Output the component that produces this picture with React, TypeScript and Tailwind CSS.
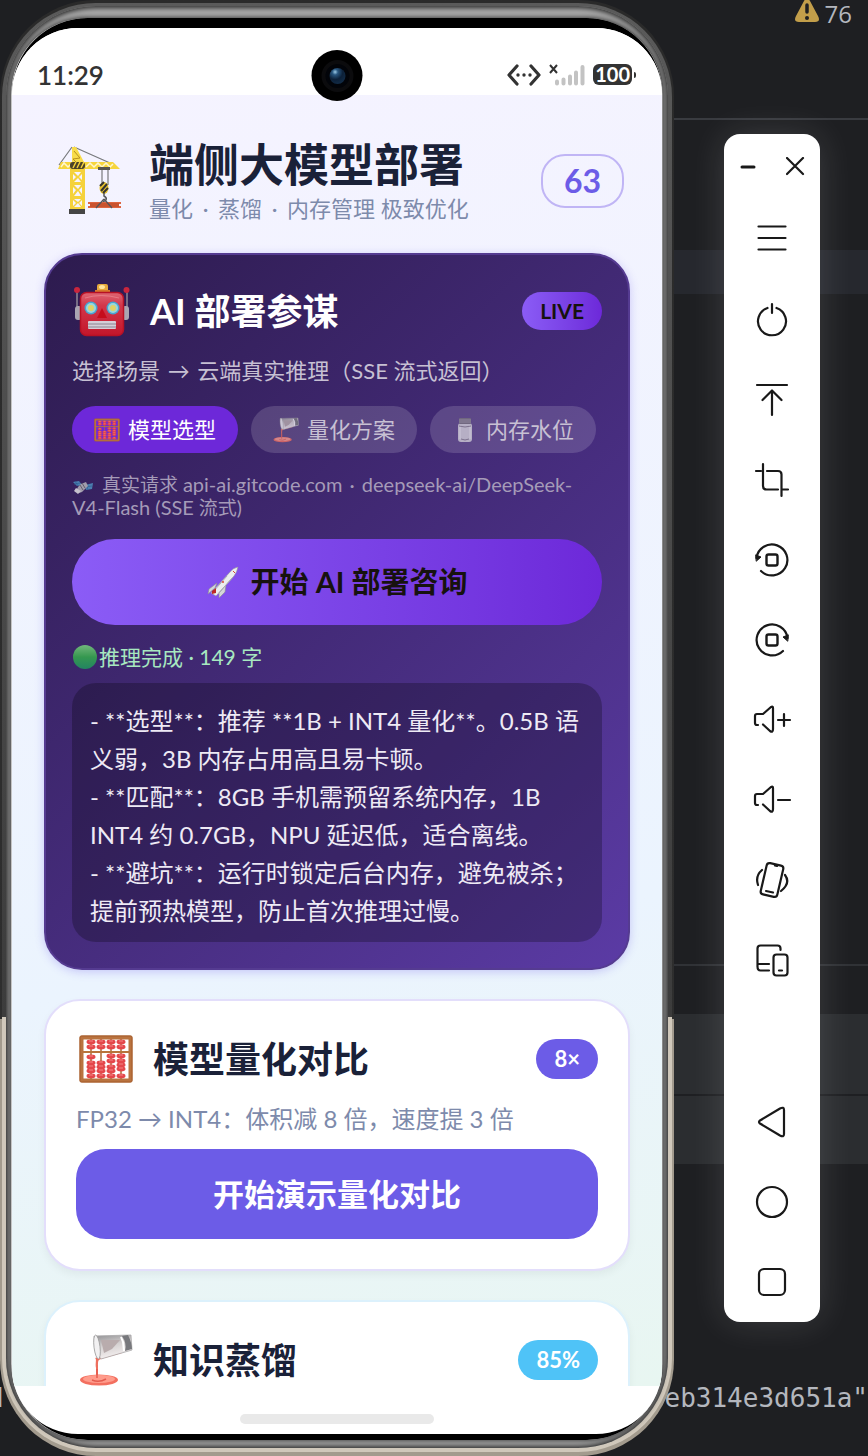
import type { ReactNode } from 'react'

type IconProps = { className?: string }

function Crane({ className }: IconProps) {
  return (
    <svg viewBox="0 0 68 74" className={className} aria-hidden="true">
      <g fill="none" stroke="#77797c" strokeWidth="1.2">
        <path d="M16 5 3 23M18 5l36 16M46 25v18M52 25v18" />
      </g>
      <path d="M16 5h4l8 15H16z" fill="#f8dc4a" />
      <path d="m18 9 6 7-7 1 4 4" fill="none" stroke="#b8901c" strokeWidth="1" />
      <path d="M5 20h52l7 7H2z" fill="#f6d53c" />
      <path d="m5 25 3-4 4 4 4-4m14 4 4-4 4 4 4-4 4 4 4-4 4 4 3-3" fill="none" stroke="#fff6ce" strokeWidth="1.5" />
      <rect x="14" y="20" width="15" height="7" rx="3" fill="#4b4328" />
      <path d="m17 26 3-6m1 6 3-6m1 6 3-6" stroke="#f4d03a" strokeWidth="1.5" />
      <path d="M14 27h15v40H14z" fill="#f5d23b" />
      <g fill="#f6f3fd">
        <path d="m18 30 7 0-3 4zM18 40l7 0-3-4zM18 43h7l-3 4zM18 54h7l-3-5zM18 57h7l-3 3zM18 65h7l-3-4z" />
        <path d="m17 32 3 3-3 3zm9 0-3 3 3 3zM17 45l3 3-3 4zm9 0-3 3 3 4zM17 58l3 3-3 3zm9 0-3 3 3 3z" />
      </g>
      <rect x="13" y="67" width="16" height="5" fill="#454545" />
      <path d="M42 25h12v3H42z" fill="#57544e" />
      <ellipse cx="48" cy="46" rx="4.500" ry="6" fill="#e7c12f" />
      <path d="m45 49 6-7m-4 9 5-5m-8-2 4-4" stroke="#333" strokeWidth="2" />
      <path d="M48 51v3c4 2 2 6-1 5" fill="none" stroke="#55565a" strokeWidth="1.500" />
      <path d="M32 60h33v2H32zM32 64h33v2H32z" fill="#de6540" />
      <path d="M34 61h29v4H34z" fill="#c9532f" />
      <path d="m48 57-8 9m8-9 8 9" fill="none" stroke="#55565a" strokeWidth="1.300" />
    </svg>
  )
}

function Robot({ className }: IconProps) {
  return (
    <svg viewBox="0 0 58 56" className={className} aria-hidden="true">
      <defs>
        <linearGradient id="robot-face" x1="0" y1="0" x2="0" y2="1">
          <stop stopColor="#df6673" />
          <stop offset=".3" stopColor="#d2374b" />
          <stop offset="1" stopColor="#c3162a" />
        </linearGradient>
      </defs>
      <path d="M5 7v17M55 7v17" stroke="#8e8897" strokeWidth="1.500" />
      <circle cx="5" cy="7" r="3" fill="#c9263d" />
      <circle cx="54.500" cy="7" r="3" fill="#c9263d" />
      <rect x="3" y="23" width="7" height="14" rx="3" fill="#aaa5b2" />
      <rect x="50" y="23" width="7" height="14" rx="3" fill="#aaa5b2" />
      <path d="M25 8V3q0-2 2-2h7q2 0 2 2v5z" fill="#e5a93c" />
      <ellipse cx="30" cy="4" rx="3" ry="2" fill="#ffe59a" />
      <rect x="23" y="7" width="15" height="3" fill="#d7772c" />
      <rect x="8.500" y="9.500" width="43" height="43" rx="6" fill="url(#robot-face)" stroke="#b71125" strokeWidth="1.500" />
      <path d="M13 15q16-5 34 0" fill="none" stroke="#ee9299" strokeWidth="1" opacity=".6" />
      <circle cx="19" cy="25" r="6.500" fill="#47a5d2" />
      <circle cx="19" cy="25" r="5" fill="#9bd6da" />
      <circle cx="19" cy="25" r="3" fill="#dfd265" />
      <circle cx="41" cy="25" r="6.500" fill="#47a5d2" />
      <circle cx="41" cy="25" r="5" fill="#9bd6da" />
      <circle cx="41" cy="25" r="3" fill="#dfd265" />
      <path d="m30 25 5 10H25z" fill="#c50d1c" />
      <rect x="16" y="38" width="28" height="8" rx="1" fill="#d4cfd7" />
      <path d="M16 41h28M16 44h28" stroke="#8d8592" strokeWidth="1" />
    </svg>
  )
}

const beadColumns = [
  { x: 12, ys: [7, 12, 22, 28, 32, 36, 41] },
  { x: 22, ys: [7, 12, 28, 32, 36, 41] },
  { x: 32, ys: [7, 12, 21, 26, 32, 36, 41] },
  { x: 42, ys: [7, 12, 21, 26, 30, 34, 41] },
]

function Abacus({ className }: IconProps) {
  return (
    <svg viewBox="0 0 54 48" className={className} aria-hidden="true">
      <path d="M12 4v40M22 4v40M32 4v40M42 4v40" stroke="#b06b35" strokeWidth="1.500" />
      {beadColumns.map((col) =>
        col.ys.map((y) => (
          <g key={`${col.x}-${y}`}>
            <ellipse cx={col.x} cy={y} rx="4.500" ry="2.400" fill="#e4474b" />
            <path d={`M${col.x - 2} ${y - 1}h4`} stroke="#f79592" strokeWidth=".8" />
          </g>
        )),
      )}
      <path d="M3 17h48" stroke="#b8743a" strokeWidth="2" />
      <rect x="2.500" y="2.500" width="49" height="43" rx="1" fill="none" stroke="#b9733f" strokeWidth="4" />
      <rect x="1" y="1" width="52" height="46" rx="1" fill="none" stroke="#a55d2d" strokeWidth="1" />
    </svg>
  )
}

function PouringLiquid({ className }: IconProps) {
  return (
    <svg viewBox="0 0 54 52" className={className} aria-hidden="true">
      <defs>
        <linearGradient id="pour-glass" x1="0" y1="0" x2=".3" y2="1">
          <stop stopColor="#8f8f92" />
          <stop offset=".5" stopColor="#d5d1d1" />
          <stop offset="1" stopColor="#f4efef" />
        </linearGradient>
      </defs>
      <path d="M16 24c2 1 0 5 1 10v10h2V32c0-5 0-6 3-7l21-6-3-2z" fill="#ee6f5e" />
      <path d="m15 2 37-1 1 15-31 9q-7-7-7-23z" fill="url(#pour-glass)" stroke="#aaa8aa" strokeWidth=".8" />
      <path d="M22 6h19l-8 9-8 4z" fill="#b9acad" />
      <ellipse cx="18" cy="13" rx="3" ry="12" transform="rotate(-7 18 13)" fill="#f2f1f2" stroke="#999" strokeWidth=".8" />
      <path d="m43 2 6-1q4 8 4 14l-7 2q2-8-3-15z" fill="#77787c" />
      <path d="m42 3 2 5 1 9" stroke="#fff" strokeWidth="2" fill="none" />
      <ellipse cx="20" cy="46" rx="19" ry="5.500" fill="#f36f5f" />
      <ellipse cx="20" cy="45" rx="16" ry="4" fill="#ff9c8c" />
      <path d="M13 46q7 3 14-1M18 44v-9" fill="none" stroke="#e45b4e" strokeWidth="1.500" />
    </svg>
  )
}

function Jar({ className }: IconProps) {
  return (
    <svg viewBox="0 0 26 26" className={className} aria-hidden="true">
      <rect x="6" y="6" width="14" height="19" rx="3" fill="#d4d2da" />
      <path d="M8 8v14M18 8v14" stroke="#fff" strokeWidth="1" opacity=".7" />
      <path d="M9 22q4 2 8 0M7 9q6 2 12 0" fill="none" stroke="#87808f" strokeWidth="1" />
      <rect x="7" y="1" width="12" height="6" rx="1" fill="#77727d" />
      <path d="M7 3h12M7 5h12" stroke="#aaa5ae" strokeWidth=".8" />
    </svg>
  )
}

function Satellite({ className }: IconProps) {
  return (
    <svg viewBox="0 0 22 16" className={className} aria-hidden="true">
      <path d="m1 3 6-1 3 4-5 1zM13 6l8-2-1 6-6 1z" fill="#4c7fb0" />
      <path d="m3 2 3 5m10-2-1 6m-13-6 6-1m5 4 7-1" stroke="#2e5d91" strokeWidth=".7" />
      <path d="m9 5 5-2 2 4-6 6-3 1-3-2q1-4 5-7z" fill="#a19cab" />
      <path d="m4 9 5 3-3 3-4-3z" fill="#c5c1cd" />
      <path d="m10 4 3 5m-5-3 3 5" stroke="#625e6c" strokeWidth="1" />
    </svg>
  )
}

function Rocket({ className }: IconProps) {
  return (
    <svg viewBox="0 0 32 32" className={className} aria-hidden="true">
      <path d="M10 17 2 23l-1 5 7-6zM16 22l-4 5v5l6-6 1-7z" fill="#d4d6d8" stroke="#898b90" strokeWidth=".6" />
      <path d="M4 27 23 6q3-4 8-5-1 5-4 9L9 30z" fill="#eceeef" stroke="#92959b" strokeWidth=".6" />
      <path d="m6 26 14-16M11 28l15-17" stroke="#a9adb3" strokeWidth="1" />
      <path d="m5 25 4-3v5l-4 1z" fill="#bd2926" />
      <circle cx="16" cy="16" r="1" fill="#d94736" />
      <path d="m26 5 2 2" stroke="#d94736" strokeWidth="1" />
    </svg>
  )
}

function Line({ children }: { children: ReactNode }) {
  return (
    <svg
      viewBox="0 0 40 40"
      className="size-10"
      fill="none"
      stroke="currentColor"
      strokeWidth="2.200"
      strokeLinecap="round"
      strokeLinejoin="round"
      aria-hidden="true"
    >
      {children}
    </svg>
  )
}

const tools = [
  { label: '菜单', icon: <path d="M6.500 6.500h27M6.500 18h27M6.500 29.500h27" /> },
  { label: '电源', icon: <path d="M20 4v9M15.500 8a14 14 0 1 0 9 0" /> },
  { label: '上滑', icon: <path d="M5 5h30M20 11v24M10.500 20 20 10.500l9.500 9.500" /> },
  { label: '截图', icon: <path d="M4 11h5M11 4v22q0 3.500 3.500 3.500H26M15 11h11q3.500 0 3.500 3.500V36M31 29.500h5" /> },
  {
    label: '向左旋转',
    icon: (
      <>
        <path d="M4.500 18a15.500 15.500 0 1 1 4.500 13" />
        <path d="m4 15 5 2-4.500 4z" fill="currentColor" strokeWidth="1" />
        <rect x="14.500" y="14.500" width="11" height="11" rx="2" strokeWidth="2.400" />
      </>
    ),
  },
  {
    label: '向右旋转',
    icon: (
      <>
        <path d="M35.500 18a15.500 15.500 0 1 0-4.500 13" />
        <path d="m36 15-5 2 4.500 4z" fill="currentColor" strokeWidth="1" />
        <rect x="14.500" y="14.500" width="11" height="11" rx="2" strokeWidth="2.400" />
      </>
    ),
  },
  {
    label: '增大音量',
    icon: <path d="M6 25H5q-2 0-2-2v-7q0-2 2-2h6l8-7q2-1 2 1v21q0 4-3 2l-7-6.500M26 20h12M32 14v12" />,
  },
  {
    label: '减小音量',
    icon: <path d="M6 25H5q-2 0-2-2v-7q0-2 2-2h6l8-7q2-1 2 1v21q0 4-3 2l-7-6.500M26 20h12" />,
  },
  {
    label: '摇一摇',
    icon: (
      <>
        <rect x="11.500" y="4" width="17" height="32" rx="3" transform="rotate(13 20 20)" />
        <path d="m14 31 7 1.500M23 5.500l2 .5M10 10q-7 6-4 15M33 15q6 8-4 16" />
      </>
    ),
  },
  {
    label: '多设备',
    icon: (
      <>
        <path d="M28.500 10V8.500q0-3-3-3h-17q-3 0-3 3v18q0 4 3 4H17M6 24h11" />
        <rect x="21.500" y="14.500" width="14" height="21" rx="3" />
        <path d="M27 30.500h3" />
      </>
    ),
  },
]

const navKeys = [
  { label: '返回', icon: <path d="M8 18.500q-2 1.500 0 3l20 12q4 2 4-1.500V8q0-3.500-4-1.500z" /> },
  { label: '主页', icon: <circle cx="20" cy="20" r="15" /> },
  { label: '多任务', icon: <rect x="7" y="7" width="26" height="26" rx="5" /> },
]

const scenes = [
  { name: '模型选型', icon: <Abacus className="size-6.5" />, active: true },
  { name: '量化方案', icon: <PouringLiquid className="size-6.5 opacity-75" />, active: false },
  { name: '内存水位', icon: <Jar className="size-6.5 opacity-75" />, active: false },
]

function EditorBackdrop() {
  return (
    <div className="absolute inset-0 flex flex-col overflow-hidden font-['DejaVu_Sans_Mono',monospace] text-[26px] text-[#b4b7be]">
      <div className="flex h-[118px] justify-end gap-1.5 pr-4 font-['Open_Sans',sans-serif] text-2xl leading-7">
        <svg viewBox="0 0 24 24" className="size-6" aria-hidden="true">
          <path d="M12-1q2 0 3 2l8 15q3 6-3 6H4q-6 0-3-6L9 1q1-2 3-2z" fill="#c29e4a" />
          <path d="M12 5v7" stroke="#1e1f22" strokeWidth="3.500" strokeLinecap="round" />
          <circle cx="12" cy="18" r="2" fill="#1e1f22" />
        </svg>
        <span>76</span>
      </div>
      <div className="h-[132px] border-t-2 border-[#393b40]" />
      <div className="h-11 bg-[#26282e]" />
      <div className="h-[670px]" />
      <div className="h-[50px] border-t-2 border-[#303236]" />
      <div className="mb-0.5 h-20 bg-[#2b2d30]" />
      <div className="h-[68px] bg-[#2b2d30]" />
      <div className="mt-auto flex h-[76px] justify-between leading-9">
        <span className="-ml-3">d</span>
        <span>eb314e3d651a"</span>
      </div>
    </div>
  )
}

function StatusBar() {
  return (
    <div className="relative flex h-[67px] shrink-0 items-center justify-between bg-white pt-[26px] pr-[26px] pl-[25px] text-[#333]">
      <span className="text-[26px] leading-10 font-semibold">11:29</span>
      <div className="flex items-center gap-2">
        <svg viewBox="0 0 34 22" className="h-[22px] w-[34px]" aria-hidden="true">
          <path d="M10 2 2 11l8 9M24 2l8 9-8 9" fill="none" stroke="#333" strokeWidth="3.200" strokeLinecap="round" strokeLinejoin="round" />
          <circle cx="11" cy="11" r="1.700" fill="#333" />
          <circle cx="17" cy="11" r="1.700" fill="#333" />
          <circle cx="23" cy="11" r="1.700" fill="#333" />
        </svg>
        <svg viewBox="0 0 36 22" className="h-[22px] w-9" aria-hidden="true">
          <path d="m1 1 7 8M8 1 1 9" stroke="#333" strokeWidth="2" />
          <path d="M8 17.500v2M14.500 15.500v4M21 12.500v7M27 8.500v11M33.500 3v16.500" stroke="#c3c3c3" strokeWidth="4" strokeLinecap="round" />
        </svg>
        <span className="flex items-center gap-0.5">
          <span className="rounded-md bg-[#333] px-0.5 text-[20px] leading-[21px] font-bold text-white">100</span>
          <span className="h-1.5 w-0.5 rounded-r bg-[#333]" />
        </span>
      </div>
      <div className="absolute top-[22px] left-1/2 grid size-[51px] -translate-x-1/2 place-items-center rounded-full bg-black">
        <div className="grid size-8 place-items-center rounded-full border-4 border-[#0b0b0d] bg-[#020409]">
          <div className="size-4 rounded-full bg-[radial-gradient(circle_at_35%_25%,#9ccbe8_0,#28567f_18%,#0c2038_48%,#122c47_80%)]" />
        </div>
      </div>
    </div>
  )
}

function AdvisorCard() {
  return (
    <section className="rounded-[38px] border-2 border-[#553b91] bg-linear-135 from-[#2d1b4e] to-[#5b3ba5] p-[26px] shadow-[0_2px_10px_rgba(108,92,231,0.3)]">
      <div className="flex h-[60px] items-center">
        <Robot className="h-14 w-[58px]" />
        <h2 className="ml-5 flex-1 text-4xl font-bold text-white">AI 部署参谋</h2>
        <span className="rounded-full bg-linear-to-r from-[#8b5cf6] to-[#6d28d9] px-[18px] text-[21px] leading-[38px] font-bold text-[#17120f]">
          LIVE
        </span>
      </div>
      <p className="mt-3 text-[22px] leading-9 text-[#c7c0d3]">
        选择场景<span className="mx-0.5"> → </span>云端真实推理（SSE 流式返回）
      </p>
      <div className="mt-[17px] flex gap-[13px]">
        {scenes.map((scene) => (
          <button
            key={scene.name}
            type="button"
            aria-pressed={scene.active}
            className={
              scene.active
                ? 'flex h-[47px] items-center gap-2 rounded-full bg-[#6d28d9] px-[22px] text-[22px] text-white'
                : 'flex h-[47px] items-center gap-2 rounded-full bg-white/15 px-[22px] text-[22px] text-[#c7c0d3]'
            }
          >
            {scene.icon}
            {scene.name}
          </button>
        ))}
      </div>
      <p className="mt-5 text-[19px] leading-[22px] text-[#a59bb8]">
        <Satellite className="mr-2 inline h-4 w-[22px]" />
        真实请求{' '}
        <span className="text-xl leading-[22px]">
          api-ai.gitcode.com<span className="mx-0.5"> · </span>deepseek-ai/DeepSeek-
          <span className="whitespace-nowrap">V4-Flash</span> (SSE
        </span>{' '}
        流式)
      </p>
      <button
        type="button"
        className="mt-5 flex h-[86px] w-full items-center justify-center gap-3 rounded-full bg-linear-to-r from-[#8b5cf6] to-[#6d28d9] text-[29px] font-bold text-[#17120f]"
      >
        <Rocket className="size-8" />
        开始 AI 部署咨询
      </button>
      <p className="mt-[14px] flex h-9 items-center gap-0.5 text-[21px] text-[#a7e8c0]">
        <span className="ml-px size-6 rounded-full bg-linear-to-b from-[#70b67c] via-[#35984f] to-[#238461]" />
        推理完成 · 149 字
      </p>
      <div className="mt-2 rounded-3xl bg-black/25 px-[18px] pt-[19px] pb-3 text-2xl leading-[38px] text-[#eeeaf5]">
        <p>- **选型**：推荐 **1B + INT4 量化**。0.5B 语义弱，3B 内存占用高且易卡顿。</p>
        <p>- **匹配**：8GB 手机需预留系统内存，1B INT4 约 0.7GB，NPU 延迟低，适合离线。</p>
        <p>- **避坑**：运行时锁定后台内存，避免被杀；提前预热模型，防止首次推理过慢。</p>
      </div>
    </section>
  )
}

function Phone() {
  return (
    <div className="flex min-w-0 flex-1 flex-col rounded-[96px] bg-linear-to-b from-[#2a2a2a] from-0% via-[#2e2e2e] via-70% to-[#a39b8e] to-70% px-0.5 pt-[3px] pb-1">
      <div className="flex min-h-0 flex-1 flex-col rounded-[94px] bg-linear-to-b from-[#5a5a5a] from-0% via-[#3c3c3c] via-70% to-[#d0c8bb] to-70% px-1 pt-[3px] pb-1">
        <div className="flex min-h-0 flex-1 flex-col rounded-[90px] bg-[#a8a8a8] px-[5px] pt-[12px] pb-2 shadow-[inset_0_0_5px_2px_#2c2c2c]">
          <div className="flex min-h-0 flex-1 flex-col rounded-[76px] bg-black px-px pt-2.5 pb-1.5 shadow-[0_0_4px_1px_#444,inset_1px_0_0_#c5c5c5,inset_-1px_0_0_#8a8a8a]">
            <main className="flex min-h-0 flex-1 flex-col overflow-hidden rounded-[66px] bg-white">
              <StatusBar />
              <div className="min-h-0 flex-1 overflow-hidden bg-linear-170 from-[#f5f3ff] via-[#ebf4fe] via-65% to-[#e8f6f1] px-8">
                <header className="flex items-center pt-10 pr-1.5 pb-[30px] pl-3">
                  <Crane className="h-[74px] w-[68px]" />
                  <div className="ml-[25px] flex-1">
                    <h1 className="text-[45px] leading-[60px] font-bold text-[#1a2138]">端侧大模型部署</h1>
                    <p className="text-[22px] leading-7 text-[#7d8aab]">
                      量化<span className="mx-1"> · </span>蒸馏<span className="mx-1"> · </span>内存管理 极致优化
                    </p>
                  </div>
                  <span className="mt-1 rounded-3xl border-2 border-[#c0b5f5] px-[21px] text-[32px] leading-[50px] font-bold text-[#6c5ce7]">
                    63
                  </span>
                </header>
                <AdvisorCard />
                <section className="mt-[29px] rounded-[36px] border-2 border-[#e3defb] bg-white px-[30px] pt-7 pb-[30px] shadow-[0_4px_8px_rgba(0,0,0,0.05)]">
                  <div className="flex h-[60px] items-center">
                    <Abacus className="ml-[3px] h-12 w-[54px]" />
                    <h2 className="ml-5 flex-1 text-4xl font-bold text-[#1a2138]">模型量化对比</h2>
                    <span className="rounded-[20px] bg-[#6c5ce7] px-[18px] text-[22px] leading-10 font-bold text-white">8×</span>
                  </div>
                  <p className="mt-3 text-2xl leading-9 text-[#7d8aab]">FP32 → INT4：体积减 8 倍，速度提 3 倍</p>
                  <button
                    type="button"
                    className="mt-3 h-[90px] w-full rounded-[30px] bg-[#6c5ce7] text-[31px] font-bold text-white"
                  >
                    开始演示量化对比
                  </button>
                </section>
                <section className="mt-[29px] rounded-[36px] border-2 border-[#dcf1fc] bg-white px-[30px] pt-7 pb-[30px] shadow-[0_4px_8px_rgba(0,0,0,0.05)]">
                  <div className="flex h-[60px] items-center">
                    <PouringLiquid className="ml-[3px] h-[52px] w-[54px]" />
                    <h2 className="ml-5 flex-1 text-4xl font-bold text-[#1a2138]">知识蒸馏</h2>
                    <span className="rounded-[20px] bg-[#4fc3f7] px-[18px] text-[22px] leading-10 font-bold text-white">85%</span>
                  </div>
                </section>
              </div>
              <div className="flex h-12 shrink-0 items-end justify-center pb-2.5">
                <div className="h-2.5 w-[194px] rounded-full bg-[#e9e9e9]" />
              </div>
            </main>
          </div>
        </div>
      </div>
    </div>
  )
}

function Toolbar() {
  return (
    <aside className="mt-[134px] w-24 self-start rounded-2xl bg-white text-[#191919] shadow-[0_0_36px_rgba(255,255,255,0.14)]">
      <div className="flex h-[66px]">
        <button type="button" aria-label="最小化" className="grid flex-1 place-items-center">
          <svg viewBox="0 0 20 20" className="size-5" aria-hidden="true">
            <path d="M4 10h12" stroke="currentColor" strokeWidth="3" strokeLinecap="round" />
          </svg>
        </button>
        <button type="button" aria-label="关闭" className="grid flex-1 place-items-center">
          <svg viewBox="0 0 20 20" className="size-5" aria-hidden="true">
            <path d="m1 1 16 16M17 1 1 17" stroke="currentColor" strokeWidth="2.200" strokeLinecap="round" />
          </svg>
        </button>
      </div>
      {tools.map((tool) => (
        <button key={tool.label} type="button" aria-label={tool.label} className="grid h-20 w-full place-items-center">
          <Line>{tool.icon}</Line>
        </button>
      ))}
      <div className="mt-[82px]">
        {navKeys.map((key) => (
          <button key={key.label} type="button" aria-label={key.label} className="grid h-20 w-full place-items-center">
            <Line>{key.icon}</Line>
          </button>
        ))}
      </div>
    </aside>
  )
}

export default function App() {
  return (
    <div className="relative h-screen overflow-hidden bg-[#1e1f22] font-[Lato,'Noto_Sans_CJK_SC',sans-serif]">
      <EditorBackdrop />
      <div className="relative flex h-full gap-[50px] pr-12">
        <Phone />
        <Toolbar />
      </div>
    </div>
  )
}
